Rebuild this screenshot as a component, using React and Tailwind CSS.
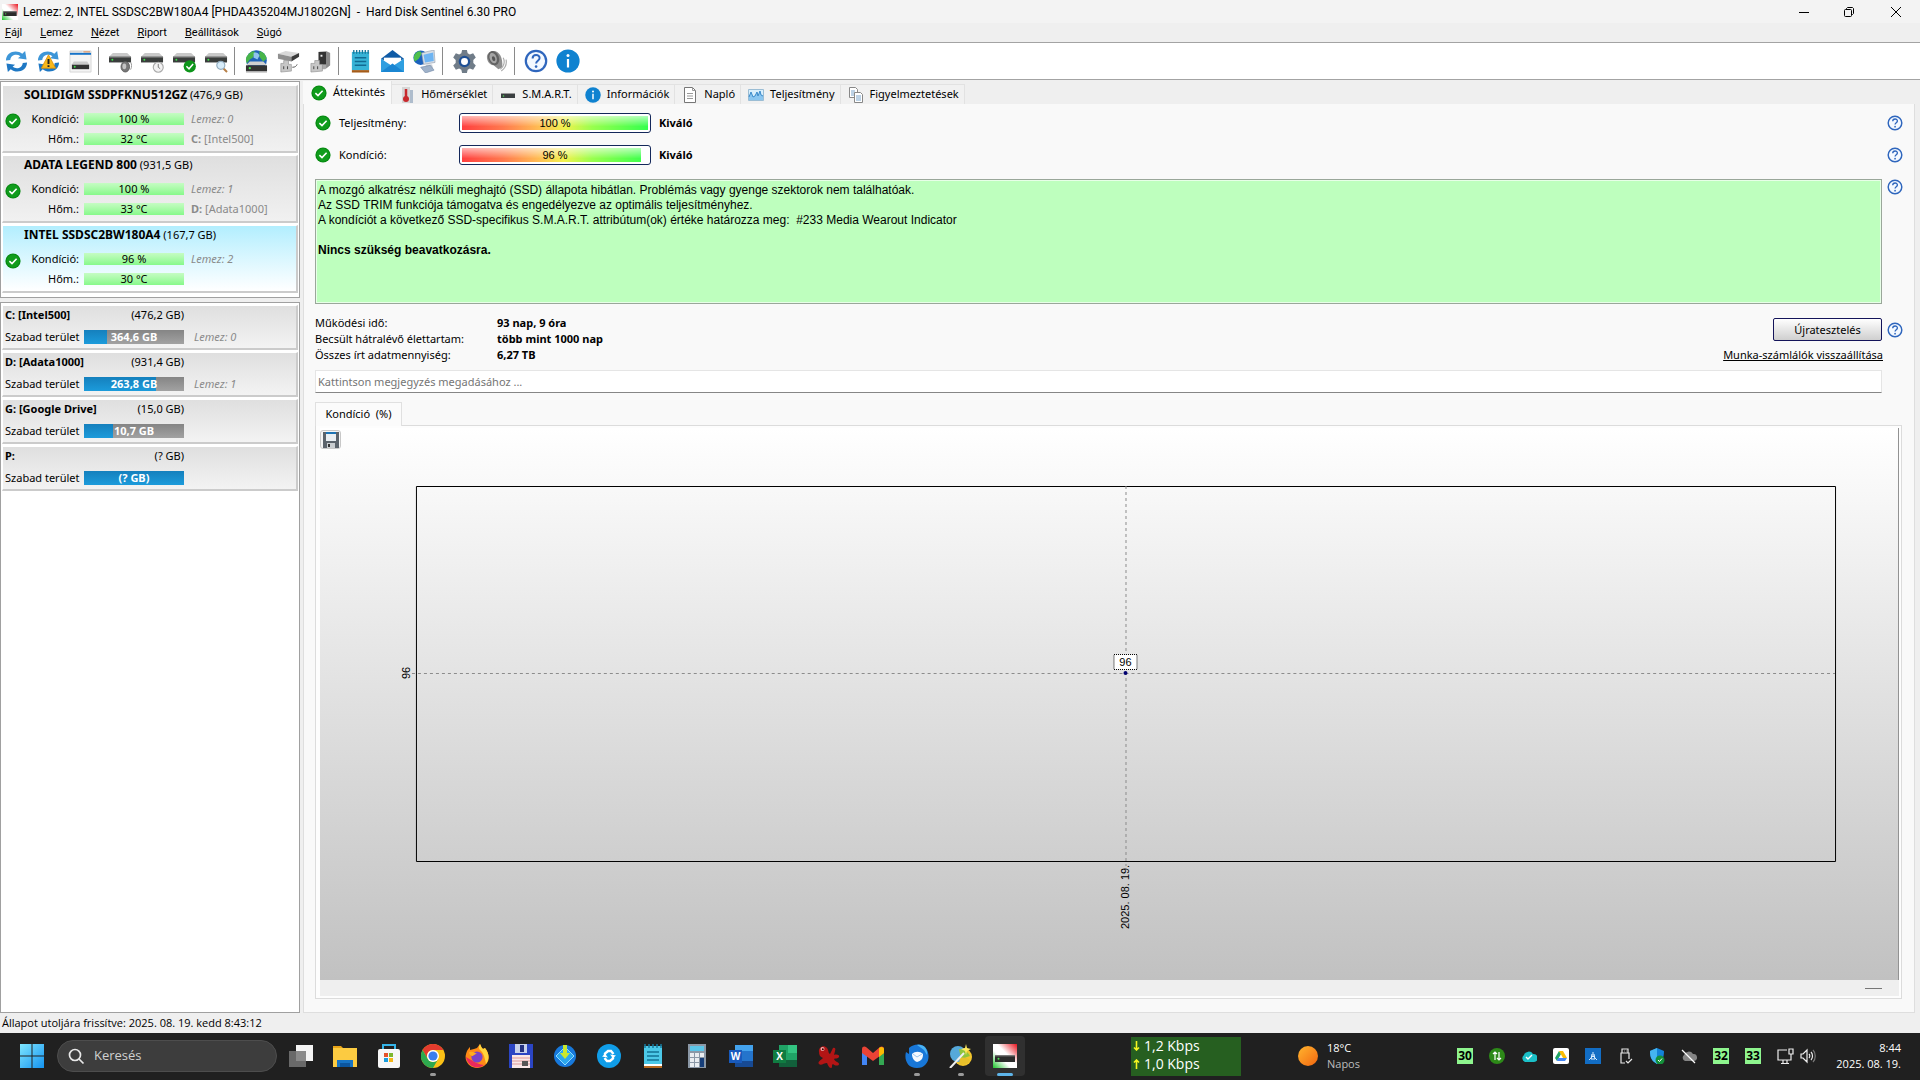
import { useState } from "react";

const CheckIcon = () => (
    <svg width="16" height="16" viewBox="0 0 16 16" className="shrink-0">
        <circle cx="8" cy="8" r="7.6" fill="#078a12" />
        <circle cx="8" cy="8" r="6.4" fill="#109c1c" />
        <path d="M4.4 8.2 7 10.6 11.6 5.8" fill="none" stroke="#fff" strokeWidth="1.6" />
    </svg>
);

const InfoIcon = ({ size = 16 }) => (
    <svg width={size} height={size} viewBox="0 0 24 24" className="shrink-0">
        <circle cx="12" cy="12" r="11.6" fill="#0f82d0" />
        <circle cx="12" cy="6.6" r="1.5" fill="#fff" />
        <path d="M12 10v8.5" stroke="#fff" strokeWidth="2.2" />
    </svg>
);

const HelpIcon = ({ size = 16 }) => (
    <svg width={size} height={size} viewBox="0 0 24 24" className="shrink-0">
        <circle cx="12" cy="12" r="10.2" fill="#f4f9ff" stroke="#2f66bd" strokeWidth="2.2" />
        <path d="M8.6 9.4c0-4.6 7-4.4 7-.4 0 2.6-3.5 2.8-3.5 5.4" fill="none" stroke="#2f66bd" strokeWidth="2" />
        <circle cx="12.1" cy="17.6" r="1.3" fill="#2f66bd" />
    </svg>
);

// Logo used in the title bar and on the taskbar
const SentinelLogo = ({ size = 16 }) => (
    <svg width={size} height={size} viewBox="0 0 24 24" className="shrink-0">
        <defs>
            <linearGradient id="logo" x1="1" y1="0" x2="0" y2="1">
                <stop offset="0" stopColor="#e8131d" />
                <stop offset=".42" stopColor="#fff" />
                <stop offset=".62" stopColor="#fff" />
                <stop offset="1" stopColor="#1cc42a" />
            </linearGradient>
        </defs>
        <path d="M0 0h24v24H0z" fill="url(#logo)" />
        <path d="M2 11h20v7H2z" fill="#2b2b2b" />
        <path d="M2 11h20v1.4H2z" fill="#777" />
        <circle cx="5.5" cy="14.8" r="1" fill="#4be04f" />
    </svg>
);

const Sync = () => (
    <g>
        <path d="M1 11C1 2 12-1 18 4l3-3 1.5 9-9-1.4 2.6-2.2C12 3.6 6 5 5.5 10.500z" fill="#3d96d8" />
        <path d="M23 13c0 9-11 12-17 7l-3 3-1.500-9 9 1.400-2.600 2.200c4.100 2.800 10.100 1.400 10.600-4.100z" fill="#1f78c4" />
    </g>
);

const Drive = () => (
    <g>
        <path d="M4 3h15l4 4H0z" fill="#c9c9c9" />
        <path d="M0 7h23v6H0z" fill="#3a3d3c" />
        <path d="M0 7h23v1.200H0z" fill="#6e6e6e" />
        <circle cx="3.500" cy="10.200" r="1" fill="#3ee04b" />
    </g>
);

const toolIcons = {
    refresh: <Sync />,
    warn: (
        <g>
            <Sync />
            <path d="M12 5 19.500 19h-15z" fill="#f9b81b" stroke="#d88c08" strokeWidth=".8" />
            <path d="M12 9.500v5M12 16v1.800" stroke="#222" strokeWidth="2" />
        </g>
    ),
    window: (
        <g>
            <path d="M1 1h22v22H1z" fill="#f4f4f4" stroke="#d5d5d5" />
            <path d="M1 2h13" stroke="#ccc" strokeWidth="1" />
            <path d="M15 2h7" stroke="#d9783b" strokeWidth="1" />
            <path d="M1 4h22" stroke="#1673c8" strokeWidth="2" />
            <path d="M3 15h18v5H3z" fill="#333" />
            <path d="M5 12h14l2 3H3z" fill="#ccc" />
            <circle cx="6" cy="17.500" r="1" fill="#3ee04b" />
        </g>
    ),
    driveSound: (
        <g>
            <Drive />
            <ellipse cx="17" cy="17.500" rx="4.500" ry="5.500" fill="#777" stroke="#555" strokeWidth=".8" />
            <ellipse cx="16" cy="17" rx="2" ry="3" fill="#c4c4c4" />
            <path d="M22.500 12.500c1.500 3 1.500 5 0 8" fill="none" stroke="#999" />
        </g>
    ),
    driveClock: (
        <g>
            <Drive />
            <circle cx="18" cy="18" r="5.200" fill="#f2f2f2" stroke="#aaa" strokeWidth="1.200" />
            <path d="M18 14.500V18l2 1.500" fill="none" stroke="#777" />
        </g>
    ),
    driveOk: (
        <g>
            <Drive />
            <circle cx="17.500" cy="17" r="6.400" fill="#0d951a" />
            <path d="m14 17 2.700 2.600 4.300-5" fill="none" stroke="#fff" strokeWidth="1.600" />
        </g>
    ),
    driveSearch: (
        <g>
            <Drive />
            <path d="m19 19 4 4" stroke="#b78048" strokeWidth="2" />
            <circle cx="16.500" cy="16" r="4.200" fill="#d8edfa" stroke="#92acbf" strokeWidth="1.200" />
        </g>
    ),
    globe: (
        <g>
            <circle cx="12" cy="11" r="10.800" fill="#1f63b8" />
            <path d="M4 4C8 0 10 1 11 3L8 8l-3 2-3 4C0 10 1 7 4 4zM15 1c4 1 7 4 7.500 8L19 12l-4-5z" fill="#48b54a" />
            <path d="M9 3c3-1 5 0 6 3l-2 4-4-2z" fill="#8fc4ef" />
            <path d="M5 12h14l4 4H1z" fill="#d0d0d0" />
            <path d="M1 16h22v6H1z" fill="#333" />
            <path d="M1 22h22v1.500H1z" fill="#aaa" />
            <circle cx="5" cy="19" r="1.200" fill="#48e850" />
        </g>
    ),
    plug: (
        <g>
            <path d="m1 4 8-3 14 2-8 4z" fill="#d8d8d8" />
            <path d="m1 4 14 3v5L1 9z" fill="#8f8f8f" />
            <path d="m15 7 8-4v4l-8 5z" fill="#3a3a3a" />
            <path d="M4 14h3v-3h5v4h3v7l-11 1z" fill="#c7c7c7" stroke="#888" strokeWidth=".6" />
            <path d="M7 17v3M11 17v3" stroke="#444" />
            <path d="M16 18c3 0 4-1 5-3" fill="none" stroke="#555" />
        </g>
    ),
    dock: (
        <g>
            <path d="m10 2 8-1 4 2v13l-5 4h-7z" fill="#a9a9a9" />
            <path d="M10 2h8v13h-8z" fill="#333" />
            <path d="M18 1.500 22 3v13l-4 3z" fill="#8a8a8a" />
            <path d="M12 5h2v2h-2z" fill="#eee" />
            <path d="M2 14h4v-3h5v4h3v7L2 23z" fill="#c7c7c7" stroke="#888" strokeWidth=".6" />
            <path d="M5 17v3M9 17v3" stroke="#444" />
        </g>
    ),
    notepad: (
        <g>
            <path d="M3 2h18v19H3z" fill="#36b3d6" />
            <path d="M3 21h18v2.500H3z" fill="#a55c19" />
            <path d="M5 0v4M8 0v4M11 0v4M14 0v4M17 0v4M20 0v4" stroke="#17779a" strokeWidth="1.400" />
            <path d="M6 8h12M6 12h12M6 16h12" stroke="#116b92" strokeWidth="1.500" />
        </g>
    ),
    mail: (
        <g>
            <path d="M0 9 12 0l12 9-12 8z" fill="#0f5ba6" />
            <path d="M3 8h18v9H3z" fill="#fff" />
            <path d="m0 9 12 8 12-8v14H0z" fill="#2f9fe0" />
            <path d="m0 23 12-9 12 9z" fill="#1a86d2" />
        </g>
    ),
    network: (
        <g>
            <circle cx="8" cy="8" r="7.600" fill="#1b62bd" />
            <path d="M3 3c3-3 6-2 6 1L6 9l-4 3C0 8 1 5 3 3z" fill="#4fbf4d" />
            <path d="m9 3 13-3 1 13-12 2z" fill="#d8dee6" stroke="#8a98a8" strokeWidth=".6" />
            <path d="m11 5 10-2.500.7 9L12.500 13z" fill="#6db4f2" />
            <path d="M14 15h6l1 5H11z" fill="#c5ccd4" />
            <path d="m8 18 10-2 4 5-9 3z" fill="#9fb2ca" stroke="#6f87a5" strokeWidth=".6" />
        </g>
    ),
    gear: (
        <g>
            <path
                d="M9.500 0h5l.8 3.400 2.300 1.200L21 3.500l2.800 4.400-2.600 2.600v3l2.600 2.600L21 20.500l-3.400-1.100-2.300 1.200-.8 3.400h-5l-.8-3.400-2.300-1.200L3 20.500.2 16.100l2.600-2.600v-3L.2 7.900 3 3.500l3.400 1.100 2.300-1.200z"
                fill="#707c88"
            />
            <circle cx="12" cy="12" r="6" fill="#1e4f94" />
            <circle cx="12" cy="12" r="3.600" fill="#fff" />
        </g>
    ),
    speaker: (
        <g>
            <path d="M9 1c6 0 10 7 9 17l-4 2-5-4c-5-1-7-5-7-9 0-3 3-6 7-6z" fill="#8e8e8e" />
            <ellipse cx="9" cy="8.500" rx="5.500" ry="7.600" fill="#626262" transform="rotate(-20 9 8.500)" />
            <ellipse cx="8.500" cy="8.500" rx="3.600" ry="5.600" fill="#a5a5a5" transform="rotate(-20 8.500 8.500)" />
            <ellipse cx="9" cy="9" rx="1.600" ry="2.600" fill="#555" transform="rotate(-20 9 9)" />
            <path d="M19 8c2 4 1 9-3 12M22 10c1 5-1 9-5 12" fill="none" stroke="#aaa" strokeWidth="1.200" />
        </g>
    ),
};

const toolGroups = [
    ["refresh", "warn", "window"],
    ["driveSound", "driveClock", "driveOk", "driveSearch"],
    ["globe", "plug", "dock"],
    ["notepad", "mail", "network"],
    ["gear", "speaker"],
    ["help", "info"],
];

const menuItems = ["Fájl", "Lemez", "Nézet", "Riport", "Beállítások", "Súgó"];

const disks = [
    { name: "SOLIDIGM SSDPFKNU512GZ", size: "476,9 GB", health: 100, temp: 32, letter: "C:", label: "[Intel500]" },
    { name: "ADATA LEGEND 800", size: "931,5 GB", health: 100, temp: 33, letter: "D:", label: "[Adata1000]" },
    { name: "INTEL SSDSC2BW180A4", size: "167,7 GB", health: 96, temp: 30 },
];

const volumes = [
    { name: "C: [Intel500]", size: "(476,2 GB)", free: "364,6 GB", used: 23, disk: "Lemez: 0" },
    { name: "D: [Adata1000]", size: "(931,4 GB)", free: "263,8 GB", used: 72, disk: "Lemez: 1" },
    { name: "G: [Google Drive]", size: "(15,0 GB)", free: "10,7 GB", used: 29 },
    { name: "P:", size: "(? GB)", free: "(? GB)", used: 100 },
];

const tabs = [
    { name: "Áttekintés", icon: <CheckIcon /> },
    {
        name: "Hőmérséklet",
        icon: (
            <svg width="16" height="16" viewBox="0 0 16 16">
                <path d="M3 0h8v16H3z" fill="#d5d5d5" />
                <path d="M11 3h3v13h-3z" fill="#aebccc" />
                <path d="M7 2v8" stroke="#c8282c" strokeWidth="2.500" />
                <circle cx="7" cy="12" r="3" fill="#c8282c" />
            </svg>
        ),
    },
    {
        name: "S.M.A.R.T.",
        icon: (
            <svg width="16" height="16" viewBox="0 0 16 16">
                <path d="M1 6h14v5H1z" fill="#3b3f41" />
                <path d="M1 6h14v1H1z" fill="#999" />
                <circle cx="3.500" cy="9" r=".8" fill="#54dc5c" />
            </svg>
        ),
    },
    { name: "Információk", icon: <InfoIcon /> },
    {
        name: "Napló",
        icon: (
            <svg width="16" height="16" viewBox="0 0 16 16">
                <path d="M2.500.5h8l3 3v12h-11z" fill="#fff" stroke="#777" />
                <path d="M10.500.5v3h3M5 6.500h6M5 9h6M5 11.500h6" fill="none" stroke="#999" />
            </svg>
        ),
    },
    {
        name: "Teljesítmény",
        icon: (
            <svg width="16" height="16" viewBox="0 0 16 16">
                <path d="M.5 2.500h15v11H.5z" fill="#d9effc" stroke="#9bbdd4" />
                <path d="M1 13V10l2-5 2 5 2-1 2-4 1 4 2-5 1 4 2 1v4z" fill="#8ac6f0" />
                <path d="m1 10 2-5 2 5 2-1 2-4 1 4 2-5 1 4 2 1" fill="none" stroke="#3a8aca" />
            </svg>
        ),
    },
    {
        name: "Figyelmeztetések",
        icon: (
            <svg width="16" height="16" viewBox="0 0 16 16">
                <path d="M1.500.5h6l2 2v8h-8z" fill="#fff" stroke="#888" />
                <path d="M3 4h4M3 6h4M3 8h3" stroke="#7aa5cc" />
                <path d="M6.500 5.500h6l2 2v8h-8z" fill="#fff" stroke="#888" />
                <path d="M8 9h5M8 11h5M8 13h5" stroke="#7aa5cc" />
            </svg>
        ),
    },
];

const DiskCard = ({ disk, index, selected, onSelect }) => (
    <div
        onClick={onSelect}
        className={`h-[68px] border-r-2 border-b-2 border-t border-l border-[#cbcbcb] border-t-white border-l-white bg-linear-to-b ${
            selected ? "from-[#b2eefe] to-white" : "from-[#dfdfdf] to-[#f1f1f1]"
        }`}
    >
        <div className="pl-[21px] leading-[18px] whitespace-nowrap">
            <b className="text-[12px]">{disk.name}</b> ({disk.size})
        </div>
        <div className="flex items-start pt-[5px]">
            <div className="w-[26px] pt-1 pl-[2px]">
                <CheckIcon />
            </div>
            <div className="w-[50px] text-right leading-5">
                <div>Kondíció:</div>
                <div>Hőm.:</div>
            </div>
            <div className="ml-[5px] flex w-[100px] flex-col gap-2 pt-1 text-center">
                <div className="h-3 bg-linear-to-b from-[#c5fcc3] to-[#86f98a] leading-3">{disk.health} %</div>
                <div className="h-3 bg-linear-to-b from-[#c5fcc3] to-[#86f98a] leading-3">{disk.temp} °C</div>
            </div>
            <div className="ml-[7px] leading-5 whitespace-nowrap text-[#8a8a8a]">
                <i>Lemez: {index}</i>
                {disk.letter && (
                    <div>
                        <b>{disk.letter}</b> {disk.label}
                    </div>
                )}
            </div>
        </div>
    </div>
);

const VolumeCard = ({ volume }) => (
    <div className="h-[45px] border-r-2 border-b-2 border-t border-l border-[#cbcbcb] border-t-white border-l-white bg-linear-to-b from-[#dfdfdf] to-[#f3f3f3] pl-[2px]">
        <div className="flex w-[179px] justify-between leading-[18px] whitespace-nowrap">
            <b>{volume.name}</b>
            <span>{volume.size}</span>
        </div>
        <div className="flex items-center pt-1 leading-[18px] whitespace-nowrap">
            <span className="w-[79px]">Szabad terület</span>
            <div className="relative h-[14px] w-[100px] bg-linear-to-b from-[#858585] to-[#a2a2a2]">
                <div className="h-full bg-linear-to-b from-[#1580bd] to-[#1c9bdb]" style={{ width: `${volume.used}%` }} />
                <b className="absolute inset-0 text-center leading-[14px] text-white">{volume.free}</b>
            </div>
            <i className="ml-[10px] text-[#8a8a8a]">{volume.disk}</i>
        </div>
    </div>
);

const Gauge = ({ label, value }) => (
    <div className="flex h-8 items-center">
        <CheckIcon />
        <span className="ml-2 w-[120px]">{label}</span>
        <div className="relative h-5 w-[192px] rounded-[3px] border border-[#14285a] bg-white p-[2px]">
            <div className="h-full overflow-hidden" style={{ width: `${value}%` }}>
                <div className="h-full w-[186px] bg-[linear-gradient(to_bottom,rgba(255,255,255,0.65),rgba(255,255,255,0.1)_75%),linear-gradient(to_right,#ff2a2a,#ff6a3a_22%,#ffb040_40%,#f0f03a_55%,#8dff3a_70%,#1eff3a)]" />
            </div>
            <span className="absolute inset-0 text-center font-['Liberation_Sans',sans-serif] leading-[18px]">{value} %</span>
        </div>
        <b className="ml-2 grow">Kiváló</b>
        <button aria-label="Súgó" className="mr-[11px]">
            <HelpIcon />
        </button>
    </div>
);

const HealthChart = () => (
    <svg viewBox="0 0 1579 552" preserveAspectRatio="none" className="block h-[552px] w-full" fontFamily="Liberation Sans, Arial, sans-serif" fontSize="11">
        <defs>
            <linearGradient id="chartBg" x1="0" y1="0" x2="0" y2="1">
                <stop offset="0" stopColor="#ffffff" />
                <stop offset="1" stopColor="#c1c1c1" />
            </linearGradient>
        </defs>
        <path d="M0 0h1579v552H0z" fill="url(#chartBg)" />
        <path d="M96.500 58.500h1420v375h-1420z" fill="none" stroke="#000" />
        <path d="M806.500 58v380M92 245.500h1424" stroke="#8c8c8c" strokeDasharray="3 3" />
        <path d="M794.500 226.500h23v15h-23z" fill="#fff" stroke="#000" strokeDasharray="1 1" />
        <text x="806" y="238" textAnchor="middle">96</text>
        <circle cx="806" cy="245" r="2" fill="#000070" />
        <text transform="translate(90 245) rotate(-90)" textAnchor="middle">96</text>
        <text transform="translate(810 501) rotate(-90)">2025. 08. 19.</text>
    </svg>
);

const taskIcons = [
    <g key="tasks">
        <path d="M7 1h17v16H7z" fill="#f4f4f4" />
        <path d="M0 7h17v16H0z" fill="#777" fillOpacity=".85" />
    </g>,
    <g key="files">
        <path d="M0 2h8l3 3h-11z" fill="#e8a317" />
        <path d="M0 4h24v19H0z" fill="#fccb41" />
        <path d="M4 16h16v7H4z" fill="#1673c4" />
        <path d="M7 19h10v4H7z" fill="#0b559e" />
    </g>,
    <g key="store">
        <path d="M6 6V1h12v5" fill="none" stroke="#35b4e8" strokeWidth="2" />
        <rect x="1" y="5" width="22" height="19" rx="2" fill="#f7f7f7" />
        <path d="M7 9h4v4H7z" fill="#e6532a" />
        <path d="M12 9h4v4h-4z" fill="#7db72f" />
        <path d="M7 14h4v4H7z" fill="#1b9ddd" />
        <path d="M12 14h4v4h-4z" fill="#f5b618" />
    </g>,
    <g key="chrome">
        <circle cx="12" cy="12" r="12" fill="#fbc116" />
        <path d="M1.600 6A12 12 0 0 1 22.400 6H12a6 6 0 0 0-5.200 9z" fill="#e33b2e" />
        <path d="M1.600 6A12 12 0 0 0 12 24l5.200-9a6 6 0 0 1-10.400 0z" fill="#2da94f" />
        <circle cx="12" cy="12" r="6" fill="#fff" />
        <circle cx="12" cy="12" r="4.600" fill="#3b7ded" />
    </g>,
    <g key="firefox">
        <path d="M2 7c1-2 2-3 3-4v3l4-1 3-1 3-4c1 2 1 3 3 5l2-1c4 5 5 11 2 15-6 8-18 6-21-3-1-4 0-6 1-9z" fill="#ff8a16" />
        <path d="M15 0c1 2 1 3 3 5l2-1c5 6 4 12 1 16-1-5-2-11-6-14-2-2-1-4 0-6z" fill="#ffd53b" />
        <path d="M1 13c1 8 10 14 18 8-4 0-10-3-18-8z" fill="#ec285c" />
        <circle cx="12" cy="13" r="5.600" fill="#7a43c9" />
        <path d="M4 8c4-1 6 1 8 2-3 0-3 2-5 2-2-1-3-2-3-4z" fill="#ffae20" />
    </g>,
    <g key="floppy">
        <path d="M0 0h24v24H0z" fill="#2b45c4" />
        <path d="M6 0h12v9H6z" fill="#c6d0ea" />
        <path d="M11 1h4v7h-4z" fill="#24317f" />
        <path d="M3 11h18v13H3z" fill="#f9e7e7" />
        <path d="M3 14h18M3 17h18M3 20h18" stroke="#d99" />
        <path d="M13 17h6v5h-6z" fill="#555" />
    </g>,
    <g key="download">
        <circle cx="12" cy="12" r="11" fill="#1779dc" />
        <path d="m12 3 9 9-9 9-9-9z" fill="#2ba7ee" stroke="#8edbff" />
        <path d="M10 1h4v8h3l-5 6-5-6h3z" fill="#c9e82e" />
    </g>,
    <g key="cloud">
        <circle cx="12" cy="12" r="12" fill="#109de8" />
        <path d="M8 13V9.500L11 7h3l2.500 3M16 11v3.500L13 17h-3l-2.500-3" fill="none" stroke="#fff" strokeWidth="2.400" />
        <path d="m5 12.500 3-2.500 3 3.500zM19 11.500 16 14l-3-3.500z" fill="#fff" />
    </g>,
    <g key="notes">
        <path d="M3 2h18v19H3z" fill="#4cc9e8" />
        <path d="M3 20h18v2H3z" fill="#fff" />
        <path d="M3 22h18v2H3z" fill="#b8691e" />
        <path d="M4 0v4M8 0v4M12 0v4M16 0v4M20 0v4" stroke="#167b9e" strokeWidth="1.500" />
        <path d="M6 8h12M6 12h12M6 16h12" stroke="#127395" strokeWidth="1.500" />
    </g>,
    <g key="calc">
        <path d="M3 0h18v24H3z" fill="#8b98a6" />
        <path d="M5 2h14v5H5z" fill="#5bc5e8" />
        <path d="M5 9h4v4H5zM10 9h4v4h-4zM15 9h4v4h-4zM5 14h4v4H5zM10 14h4v4h-4zM5 19h4v4H5zM10 19h4v4h-4z" fill="#e9edf0" />
        <path d="M15 14h4v9h-4z" fill="#163e79" />
    </g>,
    <g key="word">
        <path d="M6 1h18v22H6z" fill="#2474cc" />
        <path d="M6 1h18v6H6z" fill="#43a2ed" />
        <path d="M6 17h18v6H6z" fill="#174a94" />
        <path d="M0 6h13v13H0z" fill="#185abd" />
        <text x="6.500" y="16" textAnchor="middle" fontSize="10" fontWeight="700" fill="#fff">W</text>
    </g>,
    <g key="excel">
        <path d="M6 1h18v22H6z" fill="#20a366" />
        <path d="M15 1h9v8h-9z" fill="#33c481" />
        <path d="M6 16h18v7H6z" fill="#12603b" />
        <path d="M0 6h13v13H0z" fill="#107c41" />
        <text x="6.500" y="16" textAnchor="middle" fontSize="10" fontWeight="700" fill="#fff">X</text>
    </g>,
    <g key="splat">
        <path d="M2 8c-1-5 5-8 8-4 2 3 1 5 3 6l3-6c2-1 3 1 2 3l-1 4c3-1 6 0 5 2s-4 1-5 2c1 3 5 3 5 5s-4 2-6 0c-2 1 0 4-2 4s-3-3-4-5c-3 0-6 3-8 1s2-4 4-6C3 13 2 11 2 8z" fill="#b31515" />
        <circle cx="5.500" cy="5" r="2" fill="#f2b2b2" />
        <circle cx="5.800" cy="5.200" r="1" fill="#400" />
    </g>,
    <g key="gmail">
        <path d="M1 5v16h5V9z" fill="#4285f4" />
        <path d="M18 9v12h5V5z" fill="#34a853" />
        <path d="M1 5c0-3 3-3 4-2l7 6 7-6c1-1 4-1 4 2v4l-11 8L1 9z" fill="#ea4335" />
        <path d="M18 4c2-2 5-1 5 1v4l-5 4z" fill="#fbbc04" />
    </g>,
    <g key="thunderbird">
        <path d="M4 4C9-1 19-1 22 6c4 8 0 18-10 18C2 24-1 15 1 8l3 2z" fill="#1877d8" />
        <path d="M12 1c6-1 11 3 10 10l-3-5z" fill="#49b3f3" />
        <path d="M7 10c3-3 8-3 11 0 0 5-2 7-6 8-3-1-5-4-5-8z" fill="#f4f9ff" />
        <path d="m8 10 4 3 5-3" fill="none" stroke="#9cc5ee" />
    </g>,
    <g key="magic">
        <circle cx="14" cy="13" r="9" fill="#f2c52c" />
        <circle cx="9" cy="10" r="8" fill="#56a9da" />
        <path d="M10 5c5 0 9 3 11 7l-9 3z" fill="#8fc43c" />
        <path d="M11 14c4-1 8 0 10 2-2 4-7 6-11 4z" fill="#e8c02a" />
        <path d="M1 24 15 9" stroke="#eee" strokeWidth="2" />
        <path d="m17 0 1 4 4 1-4 2-1 4-1-4-4-2 4-1z" fill="#ffe95c" />
    </g>,
];

const trayIcons = [
    "30",
    <g key="updown">
        <circle cx="8" cy="8" r="8" fill="#2d8a18" />
        <path d="M6 12V4M4 6l2-2 2 2M10 4v8M8 10l2 2 2-2" fill="none" stroke="#fff" strokeWidth="1.200" />
    </g>,
    <g key="cloudok">
        <path d="M4 14a4 4 0 0 1-1-7 5 5 0 0 1 9-1 4 4 0 0 1 1 8z" fill="#1bc0c8" />
        <path d="m5 9 2 2 4-4" fill="none" stroke="#fff" strokeWidth="1.400" />
    </g>,
    <g key="gdrive">
        <rect width="16" height="16" rx="2" fill="#fff" />
        <path d="m6 3 2 3-4 7-2-3z" fill="#20a464" />
        <path d="M6 3h4l4 7h-4z" fill="#fbbc04" />
        <path d="M5 10h9l-2 3H4z" fill="#4285f4" />
    </g>,
    <g key="blue">
        <path d="M0 0h16v16H0z" fill="#126dc4" />
        <path d="M8 4v4l-4 4M8 8l4 4M7 6l-1 5h4L9 6" fill="none" stroke="#d7ecff" />
    </g>,
    <g key="usb" fill="none" stroke="#e8e8e8" strokeWidth="1.200">
        <path d="M5 5V1h6v4M8 15H4V5h8v6M7 3h.5M9 3h.5" />
        <path d="m9 13 2 2 4-4" />
    </g>,
    <g key="shield">
        <path d="m8 0 7 3c0 7-2 10-7 13C3 13 1 10 1 3z" fill="#1482d8" />
        <path d="M8 0v16C3 13 1 10 1 3z" fill="#45b5f0" />
        <circle cx="11" cy="12" r="4.500" fill="#14913a" />
        <path d="m9 12 1.500 1.500L13 10.500" fill="none" stroke="#fff" />
    </g>,
    <g key="cloudoff">
        <path d="M4 13a3.500 3.500 0 0 1-1-6 5 5 0 0 1 9-1 3.500 3.500 0 0 1 1 7z" fill="#858585" />
        <path d="m1 2 13 13" stroke="#fff" strokeWidth="1.300" />
    </g>,
    "32",
    "33",
];

const App = () => {
    const [selected, setSelected] = useState(2);
    const [activeTab, setActiveTab] = useState("Áttekintés");
    const [note, setNote] = useState("");

    return (
        <div className="flex h-screen flex-col overflow-hidden bg-[#efefef] font-['Noto_Sans','Open_Sans',sans-serif] text-[11px] text-black">
            {/* Title bar */}
            <header className="flex h-[23px] shrink-0 items-center bg-[#f3f3f3] pl-[2px]">
                <SentinelLogo />
                <span className="ml-[5px] grow font-['Roboto',sans-serif] text-[12px] whitespace-pre">
                    Lemez: 2, INTEL SSDSC2BW180A4 [PHDA435204MJ1802GN]  -  Hard Disk Sentinel 6.30 PRO
                </span>
                <div className="flex">
                    <button aria-label="Kis méret" className="w-[45px]">
                        <svg width="10" height="10" className="mx-auto"><path d="M0 5.500h10" stroke="#000" /></svg>
                    </button>
                    <button aria-label="Előző méret" className="w-[45px]">
                        <svg width="10" height="10" className="mx-auto" fill="none" stroke="#000">
                            <rect x=".5" y="2.500" width="7" height="7" rx="1" />
                            <path d="M2.500 2.500v-1l1-1h5l1 1v5l-1 1h-1" />
                        </svg>
                    </button>
                    <button aria-label="Bezárás" className="w-[49px]">
                        <svg width="10" height="10" className="mx-auto"><path d="m0 0 10 10M10 0 0 10" stroke="#000" /></svg>
                    </button>
                </div>
            </header>

            <nav className="flex h-5 shrink-0 items-center gap-[18px] border-b border-[#a3a3a3] pl-[5px] font-['Roboto',sans-serif]">
                {menuItems.map((item) => (
                    <button key={item} className="leading-5">
                        <span className="underline">{item[0]}</span>
                        {item.slice(1)}
                    </button>
                ))}
            </nav>

            {/* Toolbar */}
            <div className="flex h-[37px] shrink-0 items-center border-b border-[#a3a3a3] bg-white">
                {toolGroups.map((group, i) => (
                    <div key={i} className="flex items-center">
                        {i > 0 && <div className="mr-[5px] ml-[2px] h-7 w-px bg-[#8a8a8a]" />}
                        {group.map((name) => (
                            <button key={name} aria-label={name} className="flex h-8 w-8 items-center justify-center">
                                {name === "help" && <HelpIcon size={24} />}
                                {name === "info" && <InfoIcon size={24} />}
                                {toolIcons[name] && (
                                    <svg width="23" height="23" viewBox="0 0 24 24">
                                        {toolIcons[name]}
                                    </svg>
                                )}
                            </button>
                        ))}
                    </div>
                ))}
            </div>

            <div className="flex min-h-0 grow pt-px">
                {/* Disk and partition lists */}
                <aside className="flex w-[300px] shrink-0 flex-col gap-1">
                    <div className="flex h-[217px] shrink-0 flex-col gap-[2px] border border-[#a0a0a0] bg-white px-px pt-[3px]">
                        {disks.map((disk, i) => (
                            <DiskCard key={disk.name} disk={disk} index={i} selected={selected === i} onSelect={() => setSelected(i)} />
                        ))}
                    </div>
                    <div className="flex grow flex-col gap-[2px] border border-[#a0a0a0] bg-white px-px pt-[2px]">
                        {volumes.map((volume) => (
                            <VolumeCard key={volume.name} volume={volume} />
                        ))}
                    </div>
                </aside>

                <main className="ml-[3px] flex min-w-0 grow flex-col pr-[5px]">
                    <div className="flex h-[23px] shrink-0 items-end">
                        {tabs.map((tab) => (
                            <button
                                key={tab.name}
                                onClick={() => setActiveTab(tab.name)}
                                className={`flex items-center gap-[6px] whitespace-nowrap border-r border-[#e2e2e2] ${
                                    activeTab === tab.name ? "h-[23px] bg-[#f9f9f9] pr-[6px] pl-2" : "h-5 border-t bg-[#f1f1f1] pr-[5px] pl-[7px]"
                                }`}
                            >
                                {tab.icon}
                                {tab.name}
                            </button>
                        ))}
                    </div>

                    <section className="flex grow flex-col border border-t-0 border-[#dedede] bg-[#f9f9f9] pt-[3px] pl-[11px]">
                        <Gauge label="Teljesítmény:" value={100} />
                        <Gauge label="Kondíció:" value={96} />

                        <div className="mt-2 flex items-start">
                            <div className="h-[125px] grow border border-[#9aa79a] bg-[#beffbe] px-[2px] pt-[3px] font-['Liberation_Sans',sans-serif] text-[12px] leading-[15px] outline-1 -outline-offset-2 outline-[#e8ffe8]">
                                <p>A mozgó alkatrész nélküli meghajtó (SSD) állapota hibátlan. Problémás vagy gyenge szektorok nem találhatóak.</p>
                                <p>Az SSD TRIM funkciója támogatva és engedélyezve az optimális teljesítményhez.</p>
                                <p className="whitespace-pre-wrap">A kondíciót a következő SSD-specifikus S.M.A.R.T. attribútum(ok) értéke határozza meg:  #233 Media Wearout Indicator</p>
                                <p className="mt-[15px] font-bold">Nincs szükség beavatkozásra.</p>
                            </div>
                            <button aria-label="Súgó" className="mr-[11px] ml-[5px]">
                                <HelpIcon />
                            </button>
                        </div>

                        <div className="mt-[11px] flex justify-between leading-4">
                            <dl className="grid grid-cols-[182px_auto] content-start">
                                <dt>Működési idő:</dt>
                                <dd className="font-bold">93 nap, 9 óra</dd>
                                <dt>Becsült hátralévő élettartam:</dt>
                                <dd className="font-bold">több mint 1000 nap</dd>
                                <dt>Összes írt adatmennyiség:</dt>
                                <dd className="font-bold">6,27 TB</dd>
                            </dl>
                            <div className="flex flex-col items-end pt-[3px]">
                                <div className="mr-[11px] flex items-center gap-[5px]">
                                    <button className="h-[23px] w-[109px] rounded-[2px] border border-[#14145a] bg-linear-to-b from-white to-[#cfcfcf]">
                                        Újratesztelés
                                    </button>
                                    <button aria-label="Súgó">
                                        <HelpIcon />
                                    </button>
                                </div>
                                <a href="#" className="mt-[6px] mr-[31px] underline">Munka-számlálók visszaállítása</a>
                            </div>
                        </div>

                        <input
                            type="text"
                            aria-label="Megjegyzés"
                            value={note}
                            onChange={(e) => setNote(e.target.value)}
                            placeholder="Kattintson megjegyzés megadásához ..."
                            className="mt-[7px] mr-8 h-[23px] border border-[#e5e5e5] border-b-[#868686] bg-white px-[2px] outline-none placeholder:text-[#757575]"
                        />

                        {/* Health history */}
                        <div className="mt-[9px]">
                            <button className="relative -mb-px block h-6 w-[87px] border border-b-0 border-[#e0e0e0] bg-[#fbfbfb] whitespace-pre">
                                Kondíció  (%)
                            </button>
                        </div>
                        <div className="mr-3 border border-[#dcdcdc] bg-[#fdfdfd] pt-[2px] pr-[2px] pb-[2px] pl-1">
                            <div className="relative border-r border-[#929292]">
                                <HealthChart />
                                <button aria-label="Mentés" className="absolute top-[2px] left-0 flex h-[19px] w-[21px] items-center justify-center rounded-[3px] border border-[#c8c8c8] bg-[#f5f5f5]">
                                    <svg width="16" height="16" viewBox="0 0 16 16">
                                        <path d="M0 0h16v16H0z" fill="#5b636b" />
                                        <path d="M3 0h10v9H3z" fill="#e9eef2" />
                                        <path d="M3 0h10v2H3z" fill="#1c73b4" />
                                        <path d="M4 11h8v5H4z" fill="#c9cdd0" />
                                        <path d="M5 12h2v3H5z" fill="#333" />
                                    </svg>
                                </button>
                            </div>
                            <div className="flex h-4 items-center justify-end bg-[#efefef] pr-[17px]">
                                <div className="h-px w-[17px] bg-[#777]" />
                            </div>
                        </div>
                    </section>
                </main>
            </div>

            <footer className="flex h-5 shrink-0 items-center pl-[2px] font-['Open_Sans',sans-serif]">Állapot utoljára frissítve: 2025. 08. 19. kedd 8:43:12</footer>

            {/* Taskbar */}
            <div className="flex h-[47px] shrink-0 items-center bg-[#202020] pr-[19px] pb-px pl-5 font-['Open_Sans',sans-serif] text-white">
                <button aria-label="Start" className="w-[37px]">
                    <svg width="24" height="24" viewBox="0 0 24 24">
                        <defs>
                            <linearGradient id="win" x1="0" y1="0" x2="1" y2="1">
                                <stop offset="0" stopColor="#7fe6ff" />
                                <stop offset="1" stopColor="#1493f0" />
                            </linearGradient>
                        </defs>
                        <path d="M0 0h11.500v11.500H0zM12.500 0H24v11.500H12.500zM0 12.500h11.500V24H0zM12.500 12.500H24V24H12.500z" fill="url(#win)" />
                    </svg>
                </button>
                <label className="flex h-8 w-[220px] items-center rounded-full border border-[#4d4d4d] bg-[#3d3d3d] pl-[10px]">
                    <svg width="17" height="17" viewBox="0 0 17 17" fill="none" stroke="#e8e8e8" strokeWidth="1.700">
                        <circle cx="7" cy="7" r="5.500" />
                        <path d="m11 11 4.500 4.500" />
                    </svg>
                    <input aria-label="Keresés" placeholder="Keresés" className="ml-[9px] w-40 bg-transparent text-[13px] outline-none placeholder:text-[#d0d0d0]" />
                </label>
                <div className="ml-[2px] flex items-center">
                    {taskIcons.map((icon, i) => (
                        <button key={i} aria-label={icon.key} className="relative flex h-10 w-11 items-center justify-center">
                            <svg width="24" height="24" viewBox="0 0 24 24">
                                {icon}
                            </svg>
                            {[3, 14, 15].includes(i) && <span className="absolute bottom-0 h-[3px] w-[6px] rounded-full bg-[#9a9a9a]" />}
                        </button>
                    ))}
                    <button aria-label="Hard Disk Sentinel" className="relative ml-[2px] flex h-10 w-10 items-center justify-center rounded-[4px] bg-[#303030]">
                        <SentinelLogo size={24} />
                        <span className="absolute bottom-0 h-[3px] w-4 rounded-full bg-[#5eb5ea]" />
                    </button>
                </div>

                <div className="ml-[106px] h-[39px] w-[110px] bg-[#265f20] pl-[2px] text-[14px] leading-[18px]">
                    {["1,2 Kbps", "1,0 Kbps"].map((speed, i) => (
                        <div key={speed} className="flex items-center gap-1">
                            <svg width="7" height="10" viewBox="0 0 7 10" fill="none" stroke="#f5f520" strokeWidth="1.600">
                                <path d={i === 0 ? "M3.500 0v9M1 6.500l2.500 2.500L6 6.500" : "M3.500 10V1M1 3.500 3.500 1 6 3.500"} />
                            </svg>
                            {speed}
                        </div>
                    ))}
                </div>

                <div className="ml-[57px] flex items-center gap-[9px] leading-4">
                    <div className="h-5 w-5 rounded-full bg-linear-to-br from-[#ffb52e] to-[#f0640f]" />
                    <div>
                        <div>18°C</div>
                        <div className="text-[#bdbdbd]">Napos</div>
                    </div>
                </div>

                <div className="ml-auto flex items-center">
                    {trayIcons.map((icon, i) => (
                        <div key={i} className="flex w-8 justify-center">
                            {typeof icon === "string" ? (
                                <b className="h-4 w-4 bg-[#8ef58e] text-center text-[12px] leading-4 text-black">{icon}</b>
                            ) : (
                                <svg width="16" height="16" viewBox="0 0 16 16">
                                    {icon}
                                </svg>
                            )}
                        </div>
                    ))}
                    <svg width="17" height="17" viewBox="0 0 17 17" fill="none" stroke="#eee" strokeWidth="1.200" className="ml-2">
                        <path d="M10 2H1v10h13V8M4 15.500h8M6 12v3M10 12v3M12 1h4v5h-4zM14 6v6" />
                    </svg>
                    <svg width="16" height="16" viewBox="0 0 16 16" fill="none" stroke="#eee" strokeWidth="1.200" className="ml-[6px]">
                        <path d="M1 6h2l4-4v12l-4-4H1zM9 6c1 1 1 3 0 4M11 4c2 2 2 6 0 8" />
                        <path d="M13 2c3 3 3 9 0 12" stroke="#777" />
                    </svg>
                    <div className="ml-2 w-[77px] text-right leading-4">
                        <div>8:44</div>
                        <div>2025. 08. 19.</div>
                    </div>
                </div>
            </div>
        </div>
    );
};

export default App;
